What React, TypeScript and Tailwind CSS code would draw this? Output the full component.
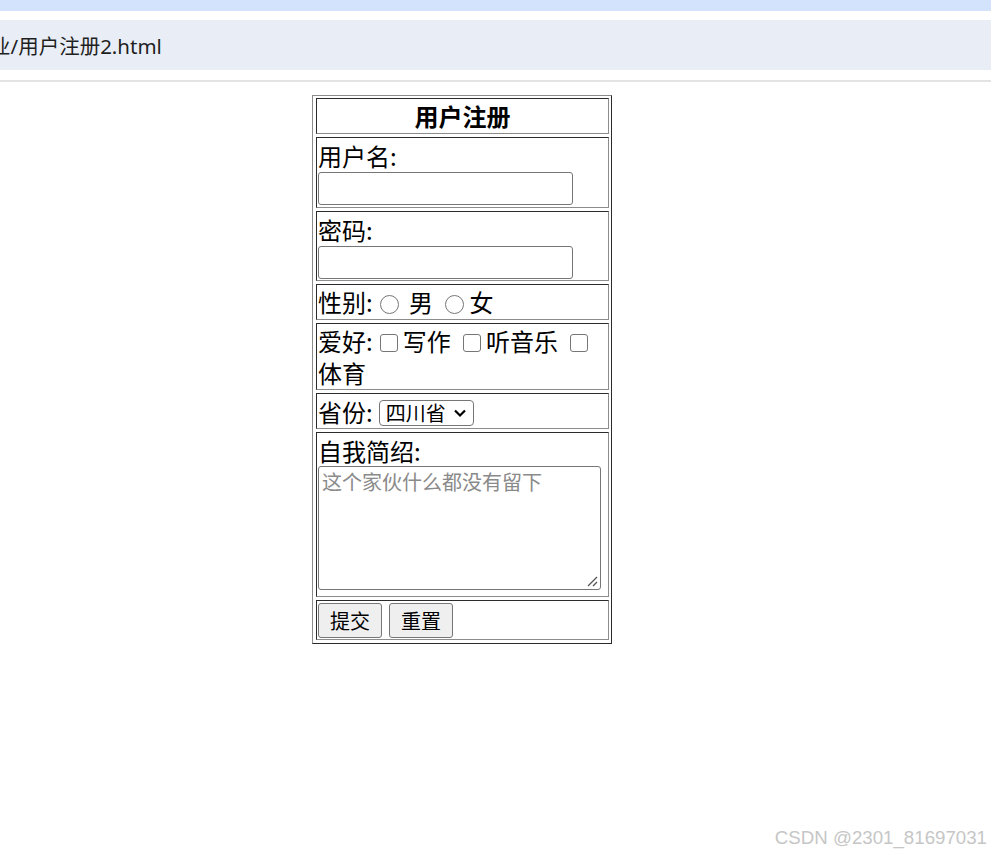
import React from 'react';

const cell =
  'border border-t-[#2b2b2b] border-l-[#2b2b2b] border-r-[#8c8c8c] border-b-[#8c8c8c] px-[1px]';

const Radio: React.FC<{ name: string }> = ({ name }) => (
  <input
    type="radio"
    name={name}
    className="appearance-none inline-block w-[19px] h-[19px] rounded-full border border-[#767676] bg-white ml-[7px] mr-[5px] align-[-2px]"
  />
);

const Check: React.FC = () => (
  <input
    type="checkbox"
    className="appearance-none inline-block w-[18px] h-[18px] rounded-[3px] border border-[#767676] bg-white ml-[7px] mr-[5px] align-[-1px]"
  />
);

const App: React.FC = () => {
  return (
    <div
      className="relative h-[858px] overflow-hidden bg-white text-black"
      style={{ fontFamily: '"Noto Sans CJK SC", "Noto Sans", sans-serif' }}
    >
      {/* browser chrome remnants */}
      <div className="h-[11px] bg-[#d3e3fd]" />
      <div className="h-[9px] bg-white" />
      <div className="h-[50px] bg-[#e9eef6] flex items-center pt-[3px]">
        <span
          className="ml-[-10px] text-[20.5px] text-[#1f1f1f] leading-none whitespace-nowrap"
          style={{ fontFamily: '"Noto Sans", "Noto Sans CJK SC", sans-serif' }}
        >
          业/用户注册2.html
        </span>
      </div>
      <div className="h-[10px] bg-white" />
      <div className="h-[2px] bg-[#e3e3e3]" />

      {/* registration table */}
      <form className="mt-[13px] ml-[312px] w-[300px] border border-t-[#8c8c8c] border-l-[#8c8c8c] border-r-[#2b2b2b] border-b-[#2b2b2b] pt-[2px] pb-[3px] pl-[3px] pr-[2px] flex flex-col gap-[3px] text-[24px]">
        <div className={`${cell} h-[36px] leading-[33px] text-center font-bold`}>用户注册</div>

        <div className={`${cell} h-[71px] pt-[1px]`}>
          <div className="h-[33px] leading-[33px]">用户名:</div>
          <input
            type="text"
            className="block w-[255px] h-[33px] rounded-[3px] border border-[#767676] bg-white"
          />
        </div>

        <div className={`${cell} h-[70px] pt-[1px]`}>
          <div className="h-[33px] leading-[33px]">密码:</div>
          <input
            type="password"
            className="block w-[255px] h-[33px] rounded-[3px] border border-[#767676] bg-white"
          />
        </div>

        <div className={`${cell} h-[36px] leading-[33px] whitespace-nowrap`}>
          性别:<Radio name="sex" /> 男 <Radio name="sex" />女
        </div>

        <div className={`${cell} h-[67px] pt-[1px] leading-[32px]`}>
          <div className="whitespace-nowrap">
            爱好:<Check />写作 <Check />听音乐 <Check />
          </div>
          <div>体育</div>
        </div>

        <div className={`${cell} h-[36px] leading-[33px] flex items-center`}>
          <span>省份:</span>
          <div className="ml-[6px] mt-[4px] w-[95px] h-[26px] rounded-[4px] border border-[#767676] flex items-center justify-between pl-[6px] pr-[6px] text-[20px] leading-none">
            <span>四川省</span>
            <svg width="14" height="10" viewBox="0 0 14 10">
              <path d="M2 2.5 L7 7.5 L12 2.5" fill="none" stroke="#000" strokeWidth="2.2" />
            </svg>
          </div>
        </div>

        <div className={`${cell} h-[165px] pt-[1px]`}>
          <div className="h-[32px] leading-[33px]">自我简绍:</div>
          <div className="relative w-[283px] h-[124px] rounded-[3px] border border-[#767676] bg-white">
            <textarea
              placeholder="这个家伙什么都没有留下"
              className="w-full h-full resize-none outline-none bg-transparent px-[3px] py-[3px] text-[20px] leading-[24px] placeholder:text-[#8a8a8a]"
            />
            <svg className="absolute right-[2px] bottom-[2px]" width="12" height="12" viewBox="0 0 12 12">
              <path d="M11 2 L2 11 M11 7 L7 11" stroke="#555" strokeWidth="1.3" />
            </svg>
          </div>
        </div>

        <div className={`${cell} h-[40px] flex items-start gap-[7px] pt-[2px]`}>
          <button
            type="button"
            className="w-[64px] h-[35px] rounded-[3px] border border-[#767676] bg-[#efefef] text-[20px] leading-none"
          >
            提交
          </button>
          <button
            type="reset"
            className="w-[64px] h-[35px] rounded-[3px] border border-[#767676] bg-[#efefef] text-[20px] leading-none"
          >
            重置
          </button>
        </div>
      </form>

      <div
        className="absolute right-[4px] bottom-[6px] text-[18.7px] text-[#c6c6c6]"
        style={{ fontFamily: '"Liberation Sans", Arial, sans-serif' }}
      >
        CSDN @2301_81697031
      </div>
    </div>
  );
};

export default App;
